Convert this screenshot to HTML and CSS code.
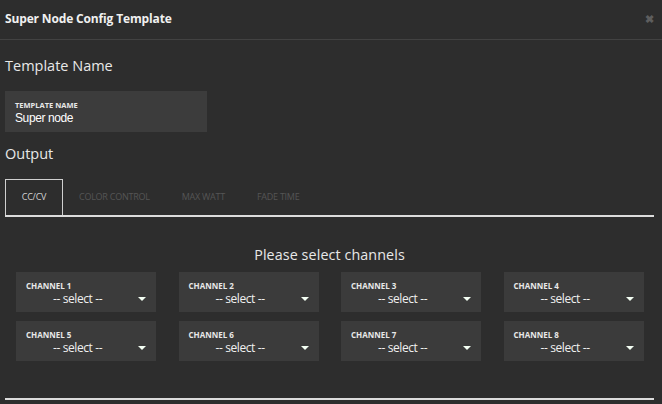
FILE: index.html
```html
<!DOCTYPE html>
<html>
<head>
<meta charset="utf-8">
<link rel="stylesheet" href="styles.css">
</head>
<body>
<div class="modal">
  <div class="header">
    <span class="title">Super Node Config Template</span>
    <span class="close">&#10006;</span>
  </div>
  <div class="body">
    <h2 class="section">Template Name</h2>
    <div class="field">
      <div class="field-label">TEMPLATE NAME</div>
      <div class="field-value">Super node</div>
    </div>
    <h2 class="section output">Output</h2>
    <div class="tabs">
      <div class="tab active">CC/CV</div>
      <div class="tab">COLOR CONTROL</div>
      <div class="tab">MAX WATT</div>
      <div class="tab">FADE TIME</div>
    </div>
    <div class="channels-title">Please select channels</div>
    <div class="grid">
      <div class="ch"><div class="ch-label">CHANNEL 1</div><div class="ch-select"><span>-- select --</span><i class="caret"></i></div></div>
      <div class="ch"><div class="ch-label">CHANNEL 2</div><div class="ch-select"><span>-- select --</span><i class="caret"></i></div></div>
      <div class="ch"><div class="ch-label">CHANNEL 3</div><div class="ch-select"><span>-- select --</span><i class="caret"></i></div></div>
      <div class="ch"><div class="ch-label">CHANNEL 4</div><div class="ch-select"><span>-- select --</span><i class="caret"></i></div></div>
      <div class="ch"><div class="ch-label">CHANNEL 5</div><div class="ch-select"><span>-- select --</span><i class="caret"></i></div></div>
      <div class="ch"><div class="ch-label">CHANNEL 6</div><div class="ch-select"><span>-- select --</span><i class="caret"></i></div></div>
      <div class="ch"><div class="ch-label">CHANNEL 7</div><div class="ch-select"><span>-- select --</span><i class="caret"></i></div></div>
      <div class="ch"><div class="ch-label">CHANNEL 8</div><div class="ch-select"><span>-- select --</span><i class="caret"></i></div></div>
    </div>
    <div class="bottom-line"></div>
  </div>
</div>
</body>
</html>
```
FILE: styles.css
```css
html, body {
  margin: 0;
  padding: 0;
  background: #2d2d2d;
  width: 662px;
  height: 404px;
  overflow: hidden;
  font-family: "Open Sans", "Noto Sans", sans-serif;
  color: #e6e6e6;
}
.header {
  border-bottom: 1px solid #424242;
  display: flex;
  align-items: center;
  justify-content: space-between;
  padding: 0 8px 0 5px;
  box-sizing: border-box;
  height: 40px;
}
.title {
  font-size: 12px;
  font-weight: 700;
  color: #f0f0f0;
  letter-spacing: -0.15px;
  margin-top: -3px;
}
.close {
  font-size: 11px;
  font-weight: 700;
  color: #5e5e5e;
  margin-top: -2px;
}
.body {
  padding: 0 8px 0 5px;
}
.section {
  margin: 0;
  font-size: 14.5px;
  font-weight: 400;
  color: #e8e8e8;
  line-height: 20px;
  padding-top: 16px;
}
.field {
  margin-top: 15px;
  width: 202px;
  height: 41px;
  background: #3c3c3c;
  box-sizing: border-box;
  padding: 10px 0 0 10px;
}
.field-label {
  font-size: 7.5px;
  font-weight: 700;
  color: #e8e8e8;
  line-height: 9px;
}
.field-value {
  font-family: "Liberation Sans", Arial, sans-serif;
  font-size: 12px;
  color: #ffffff;
  line-height: 16px;
  letter-spacing: -0.4px;
}
.output {
  padding-top: 12px;
}
.tabs {
  margin-top: 15px;
  display: flex;
  border-bottom: 2px solid #dcdcdc;
  height: 38px;
  box-sizing: border-box;
}
.tab {
  font-size: 9px;
  color: #555555;
  padding: 0 16px;
  line-height: 36px;
  height: 36px;
  box-sizing: border-box;
  letter-spacing: -0.25px;
}
.tab.active {
  border: 1px solid #cfcfcf;
  border-bottom: none;
  color: #d0d0d0;
  line-height: 34px;
  width: 58px;
  text-align: center;
  padding: 0;
}
.channels-title {
  text-align: center;
  font-size: 14.3px;
  color: #e8e8e8;
  margin-top: 28px;
  line-height: 20px;
  letter-spacing: 0.1px;
}
.grid {
  display: grid;
  grid-template-columns: repeat(4, 140px);
  column-gap: 22.5px;
  row-gap: 9px;
  margin: 7px 0 0 11px;
}
.ch {
  height: 40px;
  background: #3b3b3b;
  box-sizing: border-box;
  padding: 9px 10px 0 10px;
}
.ch-label {
  font-size: 8px;
  font-weight: 700;
  color: #e8e8e8;
  line-height: 10px;
}
.ch-select {
  display: flex;
  align-items: center;
  justify-content: space-between;
  font-size: 12px;
  color: #f0f0f0;
  line-height: 16px;
  letter-spacing: -0.4px;
}
.ch-select span {
  margin-left: 27px;
}
.caret {
  width: 0;
  height: 0;
  border-left: 4px solid transparent;
  border-right: 4px solid transparent;
  border-top: 4px solid #f4fff4;
}
.bottom-line {
  margin-top: 37px;
  height: 2px;
  background: #dcdcdc;
  width: 649px;
}
```
